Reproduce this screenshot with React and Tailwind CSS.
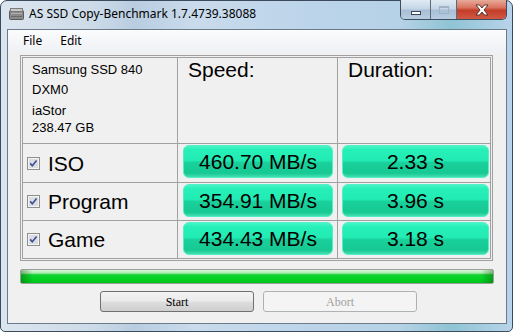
import React from "react";

const sans = { fontFamily: '"Liberation Sans", Arial, sans-serif' };

function Check() {
  return (
    <svg width="13" height="13" viewBox="0 0 13 13" className="shrink-0">
      <rect x="0.5" y="0.5" width="12" height="12" fill="#f4f4f4" stroke="#8e8f8f" />
      <rect x="2" y="2" width="9" height="9" fill="#dcdde0" />
      <path d="M3.2 6.4 L5.3 8.8 L9.6 3.4" fill="none" stroke="#3d4f9a" strokeWidth="1.6" />
    </svg>
  );
}

function GreenBox({ w, ml, children }) {
  return (
    <div
      className={`${w} ${ml} mt-px h-[33px] rounded-[6px] border border-[#52eec6] bg-[linear-gradient(to_bottom,#47f5c8_0%,#26efb7_12%,#22ecb4_46%,#19d09b_54%,#17c993_88%,#42dfb0_100%)] flex items-center justify-center text-[21px] text-black leading-none`}
      style={sans}
    >
      {children}
    </div>
  );
}

function Row({ label, speed, dur, last }) {
  return (
    <>
      <div className="bg-[#f0f0f0] flex items-center pl-[4px]">
        <Check />
        <span className="ml-[8px] text-[21px] text-black leading-none" style={sans}>
          {label}
        </span>
      </div>
      <div className="bg-[#f0f0f0] flex items-start">
        <GreenBox w="w-[150px]" ml="ml-[5px]">{speed}</GreenBox>
      </div>
      <div className="bg-[#f0f0f0] flex items-start">
        <GreenBox w="w-[147px]" ml="ml-[4px]">{dur}</GreenBox>
      </div>
    </>
  );
}

export default function App() {
  return (
    <div className="w-[513px] h-[332px] bg-white overflow-hidden">
      <div className="w-[513px] h-[332px] rounded-t-[7px] rounded-b-[5px] border border-[#3c4b5c] bg-[linear-gradient(to_right,#dbe5ef_0%,#cddbe8_18%,#b9cde1_26%,#c9dbec_38%,#bcd4ea_60%,#b6d2e6_78%,#8fc4d4_88%,#b8d3ea_100%)] flex flex-col pl-[6px] pr-[5px] pb-[7px]">
        {/* title bar */}
        <div className="h-[28px] flex items-start justify-between shrink-0">
          <div className="flex items-start pt-[5px]">
            <svg width="15" height="14" viewBox="0 0 15 14" className="ml-[2px] mt-[1px]">
              <rect x="0.5" y="3.5" width="14" height="9" rx="1" fill="#8a8a8a" stroke="#5a5a5a" />
              <rect x="1.5" y="1.5" width="12" height="3" fill="#c9c9c9" stroke="#7a7a7a" />
              <rect x="2" y="6" width="11" height="1" fill="#b0b0b0" />
              <rect x="2" y="9" width="11" height="1" fill="#6a6a6a" />
            </svg>
            <span
              className="ml-[5px] text-[12px] leading-[16px] text-black"
              style={{ fontFamily: '"Noto Sans", "Open Sans", sans-serif' }}
            >
              AS SSD Copy-Benchmark 1.7.4739.38088
            </span>
          </div>
          <div className="-mt-px flex h-[20px] rounded-b-[5px] border border-t-0 border-[#3d4d5e] overflow-hidden">
            <div className="w-[30px] h-full border-r border-[#5a6b7c] bg-[linear-gradient(to_bottom,#e0eaf3_0%,#c6d6e6_45%,#a9bfd5_55%,#b8cde0_100%)] flex items-center justify-center">
              <div className="mt-[6px] w-[10px] h-[4px] bg-white border border-[#3a4656]" />
            </div>
            <div className="w-[26px] h-full border-r border-[#5a6b7c] bg-[linear-gradient(to_bottom,#e0eaf3_0%,#c6d6e6_45%,#a9bfd5_55%,#b8cde0_100%)] flex items-center justify-center">
              <div className="w-[10px] h-[8px] border border-[#9fb2c6] border-t-2" />
            </div>
            <div className="w-[49px] h-full bg-[linear-gradient(to_bottom,#e8aa9a_0%,#d8735f_40%,#c33d29_55%,#cf5a44_100%)] flex items-center justify-center">
              <svg width="14" height="12" viewBox="0 0 14 12">
                <path
                  d="M1 1 H4.5 L7 4 L9.5 1 H13 L9 6 L13 11 H9.5 L7 8 L4.5 11 H1 L5 6 Z"
                  fill="#ffffff"
                  stroke="#4a2a25"
                  strokeWidth="0.9"
                  strokeLinejoin="round"
                />
              </svg>
            </div>
          </div>
        </div>

        {/* client area */}
        <div className="flex-1 border border-[#6c7b8c] bg-[#f0f0f0] flex flex-col">
          {/* menu */}
          <div
            className="h-[22px] shrink-0 flex items-center pl-[6px] bg-[linear-gradient(to_bottom,#fbfcfd,#eef1f5)] text-[12px] leading-[22px] text-black"
            style={{ fontFamily: '"Noto Sans", "Open Sans", sans-serif' }}
          >
            <span className="px-[9px]">File</span>
            <span className="px-[9px]">Edit</span>
          </div>

          {/* table */}
          <div className="ml-[12px] mt-[3px] w-[473px] border border-[#a0a0a0] p-px">
            <div className="border border-[#a0a0a0] bg-[#a0a0a0] grid grid-cols-[154px_159px_152px] grid-rows-[85px_38px_37px_37px] gap-px">
              <div className="bg-[#f0f0f0] pl-[9px] pt-[4px] text-[13px] text-black" style={sans}>
                <div className="leading-[16px]">Samsung SSD 840</div>
                <div className="leading-[16px] mt-[4px]">DXM0</div>
                <div className="leading-[16px] mt-[5px]">iaStor</div>
                <div className="leading-[17px]">238.47 GB</div>
              </div>
              <div className="bg-[#f0f0f0] pl-[10px] text-[21px] leading-[24px] text-black" style={sans}>
                Speed:
              </div>
              <div className="bg-[#f0f0f0] pl-[10px] text-[21px] leading-[24px] text-black" style={sans}>
                Duration:
              </div>
              <Row label="ISO" speed="460.70 MB/s" dur="2.33 s" />
              <Row label="Program" speed="354.91 MB/s" dur="3.96 s" />
              <Row label="Game" speed="434.43 MB/s" dur="3.18 s" />
            </div>
          </div>

          {/* progress */}
          <div className="ml-[12px] mt-[8px] w-[474px] h-[15px] rounded-[2px] border border-[#9aa09a] bg-[linear-gradient(to_right,rgba(0,60,0,0.35)_0%,rgba(0,60,0,0)_2.5%,rgba(0,60,0,0)_97.5%,rgba(0,60,0,0.35)_100%),linear-gradient(to_bottom,#dcf7dc_0%,#a4eba6_25%,#14d234_36%,#00d320_70%,#00c21c_100%)]" />

          {/* buttons */}
          <div className="mt-[7px] ml-[92px] flex gap-[9px]" style={{ fontFamily: '"Liberation Serif", "Times New Roman", serif' }}>
            <div className="w-[154px] h-[21px] rounded-[3px] border border-[#707070] bg-[linear-gradient(to_bottom,#f3f3f3_0%,#ebebeb_48%,#dddddd_52%,#cfcfcf_100%)] flex items-center justify-center text-[12px] text-black">
              Start
            </div>
            <div className="w-[154px] h-[21px] rounded-[3px] border border-[#adb2b5] bg-[#f4f4f4] flex items-center justify-center text-[12px] text-[#a0a0a0]">
              Abort
            </div>
          </div>
        </div>
      </div>
    </div>
  );
}
